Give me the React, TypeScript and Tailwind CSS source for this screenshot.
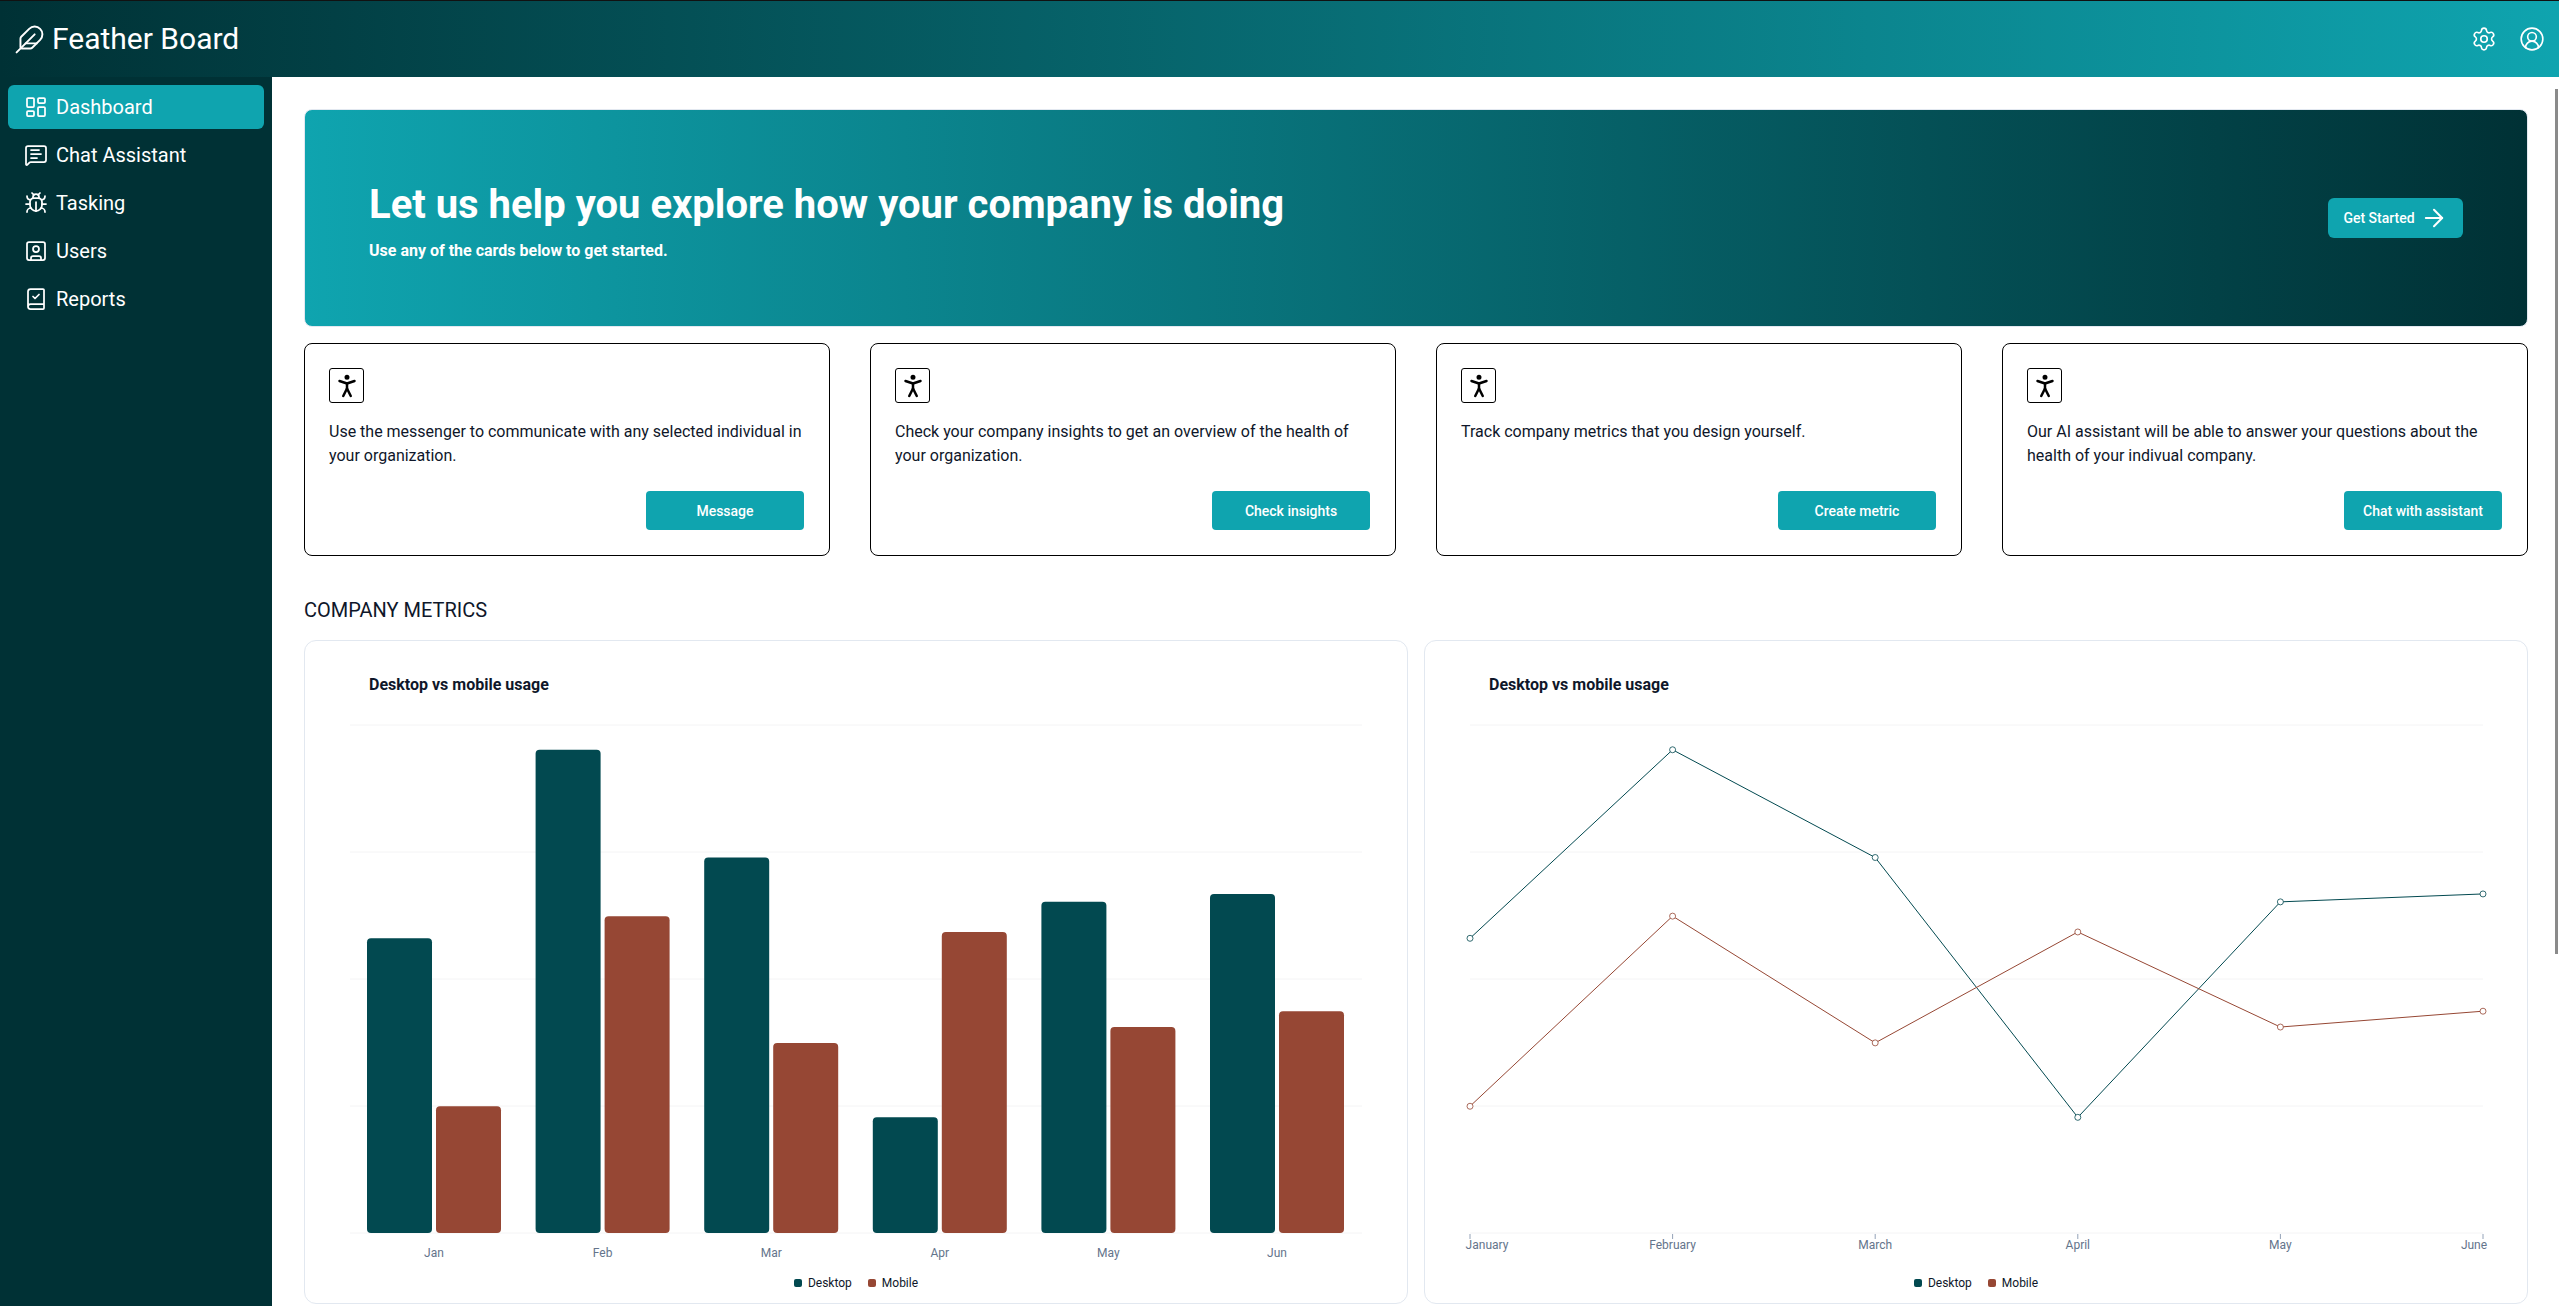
import React from 'react';
import {
  ArrowRight,
  BookCheck,
  Bug,
  CircleUserRound,
  Feather,
  LayoutDashboard,
  MessageSquareText,
  PersonStanding,
  Settings,
  SquareUser,
} from 'lucide-react';

const DESKTOP = '#024950';
const MOBILE = '#964734';

const chartData = [
  { short: 'Jan', month: 'January', desktop: 186, mobile: 80 },
  { short: 'Feb', month: 'February', desktop: 305, mobile: 200 },
  { short: 'Mar', month: 'March', desktop: 237, mobile: 120 },
  { short: 'Apr', month: 'April', desktop: 73, mobile: 190 },
  { short: 'May', month: 'May', desktop: 209, mobile: 130 },
  { short: 'Jun', month: 'June', desktop: 214, mobile: 140 },
];

const navItems = [
  { label: 'Dashboard', icon: LayoutDashboard, active: true },
  { label: 'Chat Assistant', icon: MessageSquareText },
  { label: 'Tasking', icon: Bug },
  { label: 'Users', icon: SquareUser },
  { label: 'Reports', icon: BookCheck },
];

const actionCards = [
  { text: 'Use the messenger to communicate with any selected individual in your organization.', button: 'Message' },
  { text: 'Check your company insights to get an overview of the health of your organization.', button: 'Check insights' },
  { text: 'Track company metrics that you design yourself.', button: 'Create metric' },
  { text: 'Our AI assistant will be able to answer your questions about the health of your indivual company.', button: 'Chat with assistant' },
];

// chart svg sits 10px above the top grid line
const BASE_Y = 518;
const valueY = (v: number) => BASE_Y - (v * 507) / 320;
const gridY = [10, 137, 264, 391, 518];

const Legend = () => (
  <div className="flex items-center justify-center gap-4 text-xs text-[#0f172a] h-[20px] mt-[10px]">
    <div className="flex items-center gap-1.5">
      <span className="w-2 h-2 rounded-[2px] bg-[#024950]" />
      Desktop
    </div>
    <div className="flex items-center gap-1.5">
      <span className="w-2 h-2 rounded-[2px] bg-[#964734]" />
      Mobile
    </div>
  </div>
);

const BarPanel = () => (
  <div className="flex-1 rounded-xl border border-[#e2e8f0] bg-white h-[664px]">
    <div className="pl-16 pt-[34px] text-base font-bold leading-5 text-[#0f172a] h-[74px]">Desktop vs mobile usage</div>
    <svg width="1101" height="548" className="block">
      {gridY.map((y) => (
        <line key={y} x1="45" x2="1057" y1={y} y2={y} stroke="#f4f4f5" strokeWidth="1" />
      ))}
      {chartData.map((d, i) => {
        const x = 62 + 168.6 * i;
        return (
          <g key={d.short}>
            <rect x={x} y={valueY(d.desktop)} width="65" height={BASE_Y - valueY(d.desktop)} rx="4" fill={DESKTOP} />
            <rect x={x + 69} y={valueY(d.mobile)} width="65" height={BASE_Y - valueY(d.mobile)} rx="4" fill={MOBILE} />
            <text x={x + 67} y="542" textAnchor="middle" fontSize="12" fill="#64748b">
              {d.short}
            </text>
          </g>
        );
      })}
    </svg>
    <Legend />
  </div>
);

const LinePanel = () => {
  const xs = chartData.map((_, i) => 45 + 202.6 * i);
  const series = [
    { key: 'desktop' as const, color: DESKTOP },
    { key: 'mobile' as const, color: MOBILE },
  ];
  return (
    <div className="flex-1 rounded-xl border border-[#e2e8f0] bg-white h-[664px]">
      <div className="pl-16 pt-[34px] text-base font-bold leading-5 text-[#0f172a] h-[74px]">Desktop vs mobile usage</div>
      <svg width="1102" height="548" className="block overflow-visible">
        {gridY.map((y) => (
          <line key={y} x1="45" x2="1058" y1={y} y2={y} stroke="#f4f4f5" strokeWidth="1" />
        ))}
        {series.map((s) => (
          <g key={s.key}>
            <polyline
              points={chartData.map((d, i) => `${xs[i]},${valueY(d[s.key])}`).join(' ')}
              fill="none"
              stroke={s.color}
              strokeWidth="1"
            />
            {chartData.map((d, i) => (
              <circle key={d.month} cx={xs[i]} cy={valueY(d[s.key])} r="3" fill="#fff" stroke={s.color} strokeOpacity="0.8" strokeWidth="1" />
            ))}
          </g>
        ))}
        {chartData.map((d, i) => {
          const labelX = i === 0 ? xs[i] + 17 : i === 5 ? xs[i] - 9 : xs[i];
          return (
            <g key={d.month}>
              <line x1={xs[i]} x2={xs[i]} y1="519" y2="524" stroke="#94a3b8" />
              <text x={labelX} y="534" textAnchor="middle" fontSize="12" fill="#64748b">
                {d.month}
              </text>
            </g>
          );
        })}
      </svg>
      <Legend />
    </div>
  );
};

export default function App() {
  return (
    <div className="h-screen overflow-hidden flex flex-col bg-white font-['Roboto',sans-serif]">
      <header className="h-[77px] shrink-0 border-t border-[#111] bg-linear-to-r/srgb from-[#003135] to-[#0fa4af] flex items-center justify-between px-[14px] text-white">
        <div className="flex items-center gap-[7px]">
          <Feather className="w-[31px] h-[31px]" strokeWidth={1.5} />
          <span className="text-[30px] leading-9">Feather Board</span>
        </div>
        <div className="flex items-center gap-[22px]">
          <Settings className="w-[26px] h-[26px]" strokeWidth={1.5} />
          <CircleUserRound className="w-[26px] h-[26px]" strokeWidth={1.5} />
        </div>
      </header>

      <div className="flex-1 flex min-h-0">
        <aside className="w-[272px] shrink-0 bg-[#003135] px-2 pt-2 flex flex-col gap-1">
          {navItems.map((item) => (
            <div
              key={item.label}
              className={`h-11 rounded-md flex items-center gap-2 pl-4 text-xl text-white ${item.active ? 'bg-[#0fa4af]' : ''}`}
            >
              <item.icon className="w-6 h-6" strokeWidth={1.75} />
              {item.label}
            </div>
          ))}
        </aside>

        <main className="flex-1 min-w-0 relative pl-8 pr-[31px] pt-8 overflow-hidden">
          <section className="h-[218px] rounded-lg border border-[#e2e8f0] bg-linear-to-r/srgb from-[#0fa4af] to-[#003135] flex items-center justify-between px-16 text-white">
            <div className="pt-2">
              <h1 className="text-[40px] leading-[48px] font-bold">Let us help you explore how your company is doing</h1>
              <p className="text-base font-bold leading-6 mt-2.5">Use any of the cards below to get started.</p>
            </div>
            <button className="h-10 w-[135px] rounded-md bg-[#0fa4af] flex items-center justify-center gap-[5px] text-sm font-medium">
              Get Started
              <ArrowRight className="w-7 h-7" strokeWidth={1.75} />
            </button>
          </section>

          <section className="mt-4 grid grid-cols-4 gap-10">
            {actionCards.map((card) => (
              <div key={card.button} className="h-[213px] rounded-lg border border-black bg-white p-6 pr-[25px] pb-[25px] flex flex-col">
                <div className="w-[35px] h-[35px] rounded-[3px] border border-black flex items-center justify-center">
                  <PersonStanding className="w-[30px] h-[30px] text-black" strokeWidth={2} />
                </div>
                <p className="mt-[17px] text-base leading-6 text-[#0f172a]">{card.text}</p>
                <div className="mt-auto flex justify-end">
                  <button className="h-[39px] w-[158px] rounded-[4px] bg-[#0fa4af] text-sm font-medium text-white">{card.button}</button>
                </div>
              </div>
            ))}
          </section>

          <h2 className="mt-10 text-xl leading-7 text-[#0f172a] uppercase">Company metrics</h2>

          <section className="mt-4 flex gap-4">
            <BarPanel />
            <LinePanel />
          </section>

          {/* scrollbar thumb */}
          <div className="absolute right-px top-[12px] w-[3px] h-[865px] bg-[#8a8a8a]" />
        </main>
      </div>
    </div>
  );
}
